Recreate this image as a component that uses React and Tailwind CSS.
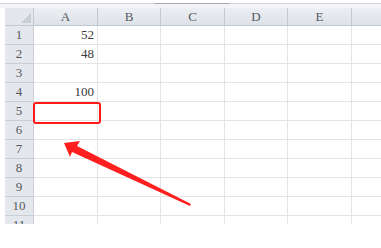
export default function App() {
    const cols = ['A', 'B', 'C', 'D', 'E', ''];
    const rows = [1, 2, 3, 4, 5, 6, 7, 8, 9, 10, 11];
    const values = { 1: '52', 2: '48', 4: '100' };

    return (
        <div className="relative w-[381px] h-[248px] bg-white overflow-hidden" style={{ fontFamily: '"Liberation Serif", "DejaVu Serif", serif' }}>
            <div className="h-[3px]" />
            <div className="flex h-[1px]">
                <div className="w-[154px] bg-[#d3d6db]" />
                <div className="w-[76px] bg-[#a9adb3]" />
                <div className="flex-1 bg-[#d3d6db]" />
            </div>
            <div className="h-[4px] bg-[#f3f4f6]" />
            <div className="ml-[5px] h-[216px] overflow-hidden">
                <div className="grid grid-cols-[29px_64px_63px_64px_63px_64px_40px] grid-rows-[18px_repeat(11,19px)]">
                    <div className="relative bg-[#e3e7ec] border-r border-b border-[#c3c9d1]">
                        <svg className="absolute right-[2px] bottom-[2px]" width="10" height="10" viewBox="0 0 10 10">
                            <polygon points="10,0 10,10 0,10" fill="#c8ced6" />
                        </svg>
                    </div>
                    {cols.map((c, i) => (
                        <div key={i} className="flex items-center justify-center bg-gradient-to-b from-[#eceff3] to-[#dde2e8] border-r border-b border-[#c3c9d1] text-[13px] text-[#55585d]">
                            {c}
                        </div>
                    ))}
                    {rows.map((r) => (
                        <>
                            <div key={'h' + r} className="flex items-center justify-center bg-[#e4e8ed] border-r border-b border-[#c9ced5] text-[13px] text-[#55585d]">
                                {r}
                            </div>
                            {cols.map((c, i) => (
                                <div key={r + '-' + i} className="flex items-center justify-end pr-[3px] border-r border-b border-[#e4e4e4] text-[13px] text-[#3a3a3a]">
                                    {i === 0 ? values[r] || '' : ''}
                                </div>
                            ))}
                        </>
                    ))}
                </div>
            </div>

            <div className="absolute left-[33px] top-[102px] w-[68px] h-[22px] rounded-[3px] border-2 border-[#ff1a1a]" />

            <svg className="absolute left-0 top-0" width="381" height="248" viewBox="0 0 381 248">
                <polygon points="64,143 80,141 77,146 191,204 190,206 72,152 70,157" fill="#ff1f1f" />
            </svg>
        </div>
    );
}
